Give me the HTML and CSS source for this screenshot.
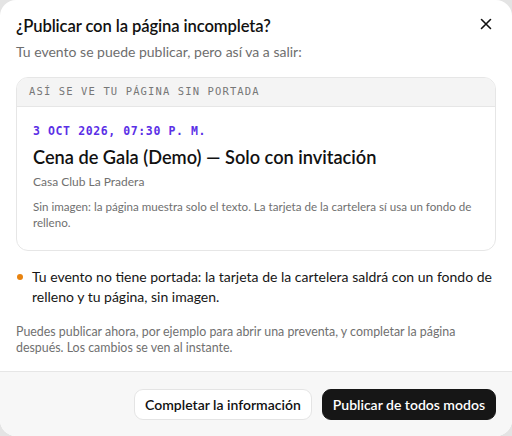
FILE: index.html
```html
<!DOCTYPE html>
<html lang="es">
<head>
<meta charset="utf-8">
<link rel="stylesheet" href="styles.css">
</head>
<body>
<div class="dialog">
  <div class="body">
    <div class="head">
      <h1 class="title">¿Publicar con la página incompleta?</h1>
      <button class="close" aria-label="Cerrar">
        <svg width="12" height="12" viewBox="0 0 12 12"><path d="M1.5 1.5L10.5 10.5M10.5 1.5L1.5 10.5" stroke="#111" stroke-width="1.6" stroke-linecap="round"/></svg>
      </button>
    </div>
    <p class="subtitle">Tu evento se puede publicar, pero así va a salir:</p>
    <div class="preview">
      <div class="preview-head">ASÍ SE VE TU PÁGINA SIN PORTADA</div>
      <div class="preview-body">
        <div class="date">3 OCT 2026, 07:30 P. M.</div>
        <div class="event">Cena de Gala (Demo) — Solo con invitación</div>
        <div class="place">Casa Club La Pradera</div>
        <div class="desc">Sin imagen: la página muestra solo el texto. La tarjeta de la cartelera sí usa un fondo de relleno.</div>
      </div>
    </div>
    <div class="warn">
      <span class="dot"></span>
      <span class="warn-text">Tu evento no tiene portada: la tarjeta de la cartelera saldrá con un fondo de relleno y tu página, sin imagen.</span>
    </div>
    <p class="note">Puedes publicar ahora, por ejemplo para abrir una preventa, y completar la página después. Los cambios se ven al instante.</p>
  </div>
  <div class="footer">
    <button class="btn btn-secondary">Completar la información</button>
    <button class="btn btn-primary">Publicar de todos modos</button>
  </div>
</div>
</body>
</html>
```
FILE: styles.css
```css
html, body {
  margin: 0;
  padding: 0;
  background: #e4e4e4;
}
body {
  font-family: "Lato", "Inter", sans-serif;
  color: #111;
}
.dialog {
  width: 512px;
  height: 436px;
  background: #fff;
  border-radius: 16px;
  overflow: hidden;
  display: flex;
  flex-direction: column;
}
.body {
  flex: 1;
  padding: 14px 16px 0 16px;
}
.head {
  display: flex;
  justify-content: space-between;
  align-items: flex-start;
}
.title {
  margin: 0;
  font-size: 16.6px;
  font-weight: 600;
  line-height: 24px;
  letter-spacing: -0.1px;
}
.close {
  border: 0;
  background: none;
  padding: 0;
  margin: 2px 2px 0 0;
  width: 16px;
  height: 16px;
  display: flex;
  align-items: center;
  justify-content: center;
}
.subtitle {
  margin: 4px 0 0;
  font-size: 14px;
  line-height: 20px;
  color: #6e6e6e;
}
.preview {
  margin-top: 15px;
  border: 1px solid #e6e6e6;
  border-radius: 12px;
  overflow: hidden;
}
.preview-head {
  background: #f4f4f4;
  border-bottom: 1px solid #e6e6e6;
  height: 28px;
  line-height: 27px;
  padding-left: 12px;
  font-family: "DejaVu Sans Mono", monospace;
  font-size: 10.5px;
  letter-spacing: 1.12px;
  color: #777;
}
.preview-body {
  padding: 16px 16px 19px 16px;
}
.date {
  font-family: "DejaVu Sans Mono", monospace;
  font-weight: bold;
  font-size: 11.5px;
  line-height: 16px;
  letter-spacing: 0.6px;
  color: #5b30e6;
}
.event {
  margin-top: 6px;
  font-size: 18.2px;
  font-weight: 600;
  line-height: 24px;
}
.place {
  margin-top: 5px;
  font-size: 12px;
  line-height: 16px;
  color: #707070;
}
.desc {
  margin-top: 9px;
  font-size: 11.6px;
  line-height: 16px;
  color: #707070;
}
.warn {
  margin-top: 16px;
  display: flex;
  align-items: flex-start;
  gap: 9px;
}
.dot {
  flex: none;
  width: 6px;
  height: 6px;
  border-radius: 50%;
  background: #e8830f;
  margin: 7px 0 0 1px;
}
.warn-text {
  font-size: 14px;
  line-height: 20px;
  color: #161616;
}
.note {
  margin: 17px 0 0;
  font-size: 12.4px;
  line-height: 16px;
  color: #707070;
}
.footer {
  height: 64px;
  border-top: 1px solid #e6e6e6;
  background: #f7f7f7;
  display: flex;
  justify-content: flex-end;
  align-items: center;
  gap: 10px;
  padding: 0 16px;
}
.btn {
  font-family: inherit;
  font-size: 14px;
  font-weight: 600;
  height: 31px;
  border-radius: 9px;
  cursor: pointer;
}
.btn-secondary {
  background: #fff;
  border: 1px solid #e4e4e4;
  color: #111;
  padding: 0 10px;
}
.btn-primary {
  background: #161616;
  border: 1px solid #161616;
  color: #fff;
  padding: 0 10px;
}
```
